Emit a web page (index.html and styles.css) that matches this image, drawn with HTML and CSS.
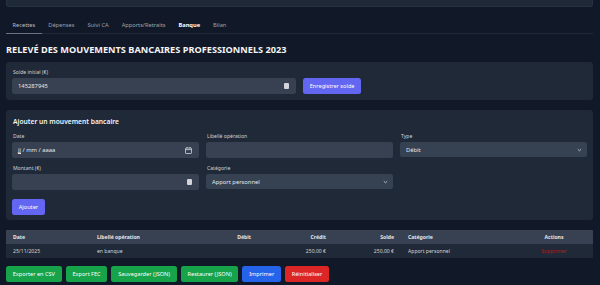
FILE: index.html
```html
<!DOCTYPE html>
<html lang="fr">
<head>
<meta charset="utf-8">
<link rel="stylesheet" href="styles.css">
</head>
<body>
<div class="page">
  <div class="topcard"></div>
  <nav class="tabs">
    <span class="tab active-line">Recettes</span>
    <span class="tab">Dépenses</span>
    <span class="tab">Suivi CA</span>
    <span class="tab">Apports/Retraits</span>
    <span class="tab current">Banque</span>
    <span class="tab">Bilan</span>
  </nav>
  <h1 class="title">RELEVÉ DES MOUVEMENTS BANCAIRES PROFESSIONNELS 2023</h1>

  <section class="card card-solde">
    <label class="lbl">Solde initial (€)</label>
    <div class="solde-row">
      <div class="input input-solde"><span class="val">145287945</span><span class="spin"></span></div>
      <button class="btn btn-indigo">Enregistrer solde</button>
    </div>
  </section>

  <section class="card card-add">
    <h2 class="card-title">Ajouter un mouvement bancaire</h2>
    <div class="grid">
      <div class="field">
        <label class="lbl">Date</label>
        <div class="input"><span class="val"><span class="caret">jj</span> / mm / aaaa</span>
          <svg class="cal" width="7" height="7" viewBox="0 0 7 7"><rect x="0.5" y="1" width="6" height="5.5" rx="0.6" fill="none" stroke="#d1d5db" stroke-width="0.8"/><line x1="0.5" y1="2.6" x2="6.5" y2="2.6" stroke="#d1d5db" stroke-width="0.8"/><line x1="2" y1="0" x2="2" y2="1.5" stroke="#d1d5db" stroke-width="0.8"/><line x1="5" y1="0" x2="5" y2="1.5" stroke="#d1d5db" stroke-width="0.8"/></svg>
        </div>
      </div>
      <div class="field">
        <label class="lbl">Libellé opération</label>
        <div class="input"></div>
      </div>
      <div class="field">
        <label class="lbl">Type</label>
        <div class="input select"><span class="val">Débit</span>
          <svg class="chev" width="5" height="4" viewBox="0 0 5 4"><path d="M0.8 1.2 L2.5 2.8 L4.2 1.2" fill="none" stroke="#d1d5db" stroke-width="0.8"/></svg>
        </div>
      </div>
      <div class="field">
        <label class="lbl">Montant (€)</label>
        <div class="input"><span class="val"></span><span class="spin"></span></div>
      </div>
      <div class="field">
        <label class="lbl">Catégorie</label>
        <div class="input select"><span class="val">Apport personnel</span>
          <svg class="chev" width="5" height="4" viewBox="0 0 5 4"><path d="M0.8 1.2 L2.5 2.8 L4.2 1.2" fill="none" stroke="#d1d5db" stroke-width="0.8"/></svg>
        </div>
      </div>
    </div>
    <button class="btn btn-indigo btn-add">Ajouter</button>
  </section>

  <table class="tbl">
    <colgroup>
      <col class="w84"><col class="w100"><col class="w68"><col class="w75"><col class="w68"><col class="w114"><col class="w78">
    </colgroup>
    <thead>
      <tr><th>Date</th><th>Libellé opération</th><th class="r">Débit</th><th class="r">Crédit</th><th class="r">Solde</th><th>Catégorie</th><th class="c">Actions</th></tr>
    </thead>
    <tbody>
      <tr><td>25/11/2025</td><td>en banque</td><td class="r"></td><td class="r">250,00 €</td><td class="r">250,00 €</td><td>Apport personnel</td><td class="c del">Supprimer</td></tr>
    </tbody>
  </table>

  <div class="actions">
    <button class="btn btn-green">Exporter en CSV</button>
    <button class="btn btn-green">Export FEC</button>
    <button class="btn btn-green">Sauvegarder (JSON)</button>
    <button class="btn btn-green">Restaurer (JSON)</button>
    <button class="btn btn-blue">Imprimer</button>
    <button class="btn btn-red">Réinitialiser</button>
  </div>
</div>
</body>
</html>
```
FILE: styles.css
```css
* { box-sizing: border-box; }
html, body { margin: 0; padding: 0; background: #111827; }
body {
  font-family: "Noto Sans", "Open Sans", sans-serif;
  color: #e5e7eb;
  width: 600px;
  height: 285px;
  overflow: hidden;
}
.page { padding: 0 7px 0 6px; }
.topcard {
  height: 7px;
  background: #1f2937;
  border-radius: 0 0 3px 3px;
  border: 1px solid #273244;
  border-top: none;
}
.tabs {
  display: flex;
  margin-top: 10px;
  border-bottom: 1px solid #1f2937;
  height: 17px;
}
.tab {
  font-size: 5.7px;
  color: #9ca3af;
  padding: 0 6.5px;
  line-height: 16px;
  height: 17px;
}
.tab.active-line { border-bottom: 1px solid #6b7280; color: #b8bec8; }
.tab.current { color: #ffffff; font-weight: 700; }
.title {
  font-size: 9.2px;
  font-weight: 700;
  color: #f3f4f6;
  margin: 9px 0 0 0;
  line-height: 14px;
}
.card {
  background: #1f2937;
  border-radius: 3px;
  padding: 6px;
}
.card-solde { margin-top: 5px; height: 38px; padding-top: 4px; }
.lbl {
  display: block;
  font-size: 5.1px;
  color: #d1d5db;
  line-height: 8px;
  height: 12px;
  padding-top: 2px;
  margin-left: 1px;
}
.solde-row { display: flex; gap: 7px; align-items: center; }
.input {
  height: 16px;
  background: #374151;
  border-radius: 2.5px;
  display: flex;
  align-items: center;
  padding: 0 6px;
  font-size: 5.8px;
  color: #e5e7eb;
}
.input .val { flex: 1; white-space: nowrap; }
.input-solde { width: 284px; }
.spin {
  width: 5px; height: 6px;
  background: #d1d5db;
  border-radius: 1px;
  margin-right: 1px;
}
.caret { text-decoration: underline; }
.cal { margin-right: 1px; }
.select { background: #364152; }
.chev { margin-right: -1px; }
.btn {
  height: 16px;
  border: none;
  border-radius: 2.5px;
  font-family: inherit;
  font-size: 5.6px;
  color: #ffffff;
  padding: 0 6.75px;
  cursor: pointer;
  line-height: 16px;
}
.btn-indigo { background: #6366f1; }
.btn-green { background: #16a34a; }
.btn-blue { background: #2563eb; }
.btn-red { background: #dc2626; }
.card-add { margin-top: 10px; height: 110px; padding-top: 6px; }
.card-title {
  font-size: 6.7px;
  font-weight: 600;
  color: #f3f4f6;
  margin: 0 0 0 1px;
  line-height: 12px;
  height: 14px;
}
.grid {
  display: grid;
  grid-template-columns: repeat(3, 187px);
  column-gap: 7px;
  row-gap: 4px;
}
.field .input { height: 16px; }
.field .select { height: 15px; }
.btn-add { margin-top: 9px; }
.tbl {
  margin-top: 10px;
  width: 587px;
  table-layout: fixed;
  border-collapse: collapse;
  font-size: 5.1px;
}
.w84 { width: 84px; } .w100 { width: 100px; } .w68 { width: 68px; }
.w75 { width: 75px; } .w114 { width: 114px; } .w78 { width: 78px; }
.tbl th, .tbl td { padding: 0 7px; height: 14px; text-align: left; white-space: nowrap; }
.tbl th { background: #374151; font-weight: 700; color: #e5e7eb; }
.tbl td { background: #1f2937; color: #d1d5db; }
.tbl .r { text-align: right; }
.tbl .c { text-align: center; }
.tbl td.del { color: #b91c1c; }
.actions { display: flex; gap: 4px; margin-top: 8px; }
```
